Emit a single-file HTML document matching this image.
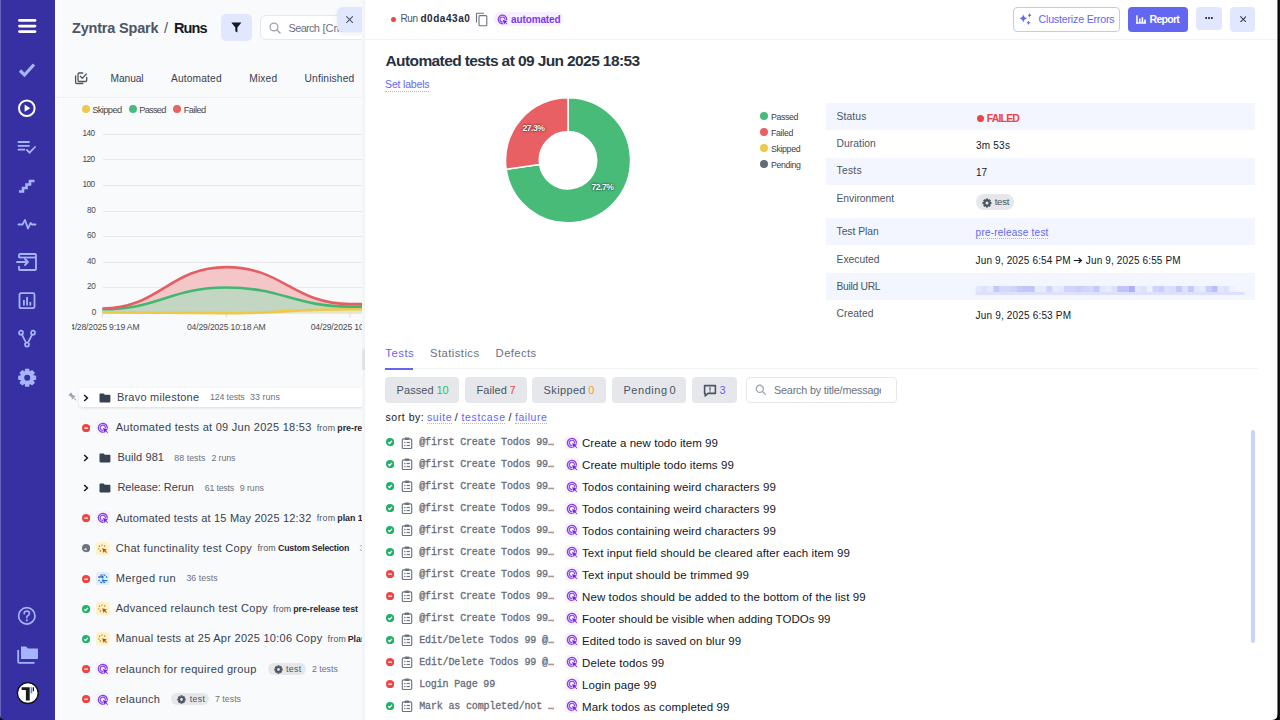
<!DOCTYPE html>
<html><head><meta charset="utf-8"><title>Runs</title>
<style>
html,body{margin:0;padding:0;width:1280px;height:720px;overflow:hidden;background:#fff}
body{position:relative;font-family:'Liberation Sans',sans-serif}
.a{position:absolute;box-sizing:border-box}
.t{position:absolute;white-space:nowrap}
</style></head><body>
<div class="a" style="left:0px;top:0px;width:55px;height:720px;background:#3730a3"></div><div class="a" style="left:0px;top:0px;width:1px;height:720px;background:#6b66bd"></div><svg class="a" style="left:17px;top:17px;" width="20" height="18" viewBox="0 0 20 18"><g stroke="#fff" stroke-width="2.8" stroke-linecap="round"><line x1="2.5" y1="3.4" x2="18" y2="3.4"/><line x1="2.5" y1="9.1" x2="18" y2="9.1"/><line x1="2.5" y1="14.6" x2="18" y2="14.6"/></g></svg><svg class="a" style="left:17px;top:61px;" width="20" height="18" viewBox="0 0 20 18"><path d="M3 9.5 L7.5 14 L17 3.5" fill="none" stroke="#a5b4fc" stroke-width="3.2" stroke-linecap="butt" stroke-linejoin="miter"/></svg><svg class="a" style="left:17px;top:99px;" width="20" height="20" viewBox="0 0 20 20"><circle cx="9.8" cy="9.2" r="7.8" fill="none" stroke="#fff" stroke-width="2"/><path d="M7.6 5.6 L13.2 9.2 L7.6 12.8 Z" fill="#fff"/></svg><svg class="a" style="left:17px;top:139px;" width="20" height="16" viewBox="0 0 20 16"><g stroke="#a5b4fc" stroke-width="1.8" fill="none" stroke-linecap="round"><line x1="1.5" y1="3" x2="12" y2="3"/><line x1="1.5" y1="6.8" x2="12" y2="6.8"/><line x1="1.5" y1="10.6" x2="7.5" y2="10.6"/><path d="M10 11 L12.6 13.6 L18 8"/></g></svg><svg class="a" style="left:17px;top:177px;" width="20" height="17" viewBox="0 0 20 17"><path d="M2 14.5 H6 V11 H9.5 V7.5 H13 V4 H17.5" fill="none" stroke="#a5b4fc" stroke-width="2.6"/></svg><svg class="a" style="left:17px;top:218px;" width="20" height="13" viewBox="0 0 20 13"><path d="M1.5 6.5 H5.5 L8 2 L11 10.5 L13.5 5 L15 6.5 H18.5" fill="none" stroke="#a5b4fc" stroke-width="1.8" stroke-linejoin="round" stroke-linecap="round"/></svg><svg class="a" style="left:16px;top:252px;" width="22" height="20" viewBox="0 0 22 20"><g fill="none" stroke="#a5b4fc" stroke-width="1.8"><path d="M3 6 V3 Q3 2 4 2 H19 Q20 2 20 3 V17 Q20 18 19 18 H4 Q3 18 3 17 V14"/><line x1="3" y1="5.5" x2="20" y2="5.5"/><path d="M1 10 H12 M9 7 L12 10 L9 13" stroke-linecap="round" stroke-linejoin="round"/></g></svg><svg class="a" style="left:17px;top:291px;" width="20" height="19" viewBox="0 0 20 19"><g fill="none" stroke="#a5b4fc" stroke-width="1.8"><rect x="2.5" y="2.2" width="15" height="15" rx="1.5"/></g><g fill="#a5b4fc"><rect x="6" y="9" width="1.8" height="5.5"/><rect x="9.2" y="6" width="1.8" height="8.5"/><rect x="12.4" y="11" width="1.8" height="3.5"/></g></svg><svg class="a" style="left:17px;top:329px;" width="20" height="20" viewBox="0 0 20 20"><g fill="none" stroke="#a5b4fc" stroke-width="1.7"><circle cx="4" cy="3.7" r="2"/><circle cx="16" cy="3.7" r="2"/><circle cx="10" cy="15.6" r="2"/><path d="M4.8 5.5 L9 13.6 M15.2 5.5 L11 13.6"/></g></svg><svg class="a" style="left:17px;top:367px;" width="20" height="21" viewBox="0 0 20 21"><path fill-rule="evenodd" fill="#a5b4fc" d="M19.18,8.69 L19.18,12.71 L16.28,13.27 L16.32,13.18 L17.97,15.63 L15.13,18.47 L12.68,16.82 L12.77,16.78 L12.21,19.68 L8.19,19.68 L7.63,16.78 L7.72,16.82 L5.27,18.47 L2.43,15.63 L4.08,13.18 L4.12,13.27 L1.22,12.71 L1.22,8.69 L4.12,8.13 L4.08,8.22 L2.43,5.77 L5.27,2.93 L7.72,4.58 L7.63,4.62 L8.19,1.72 L12.21,1.72 L12.77,4.62 L12.68,4.58 L15.13,2.93 L17.97,5.77 L16.32,8.22 L16.28,8.13 Z M13.2,10.7 A3.0,3.0 0 1,0 7.199999999999999,10.7 A3.0,3.0 0 1,0 13.2,10.7 Z"/></svg><svg class="a" style="left:16px;top:605px;" width="22" height="22" viewBox="0 0 22 22"><circle cx="10.8" cy="10.9" r="8.2" fill="none" stroke="#a5b4fc" stroke-width="1.7"/><path d="M8.2 8.6 Q8.2 6 10.8 6 Q13.4 6 13.4 8.4 Q13.4 10 11.6 10.8 Q10.8 11.2 10.8 12.6" fill="none" stroke="#a5b4fc" stroke-width="1.7" stroke-linecap="round"/><circle cx="10.8" cy="15.3" r="1.1" fill="#a5b4fc"/></svg><svg class="a" style="left:16px;top:644px;" width="23" height="21" viewBox="0 0 23 21"><path d="M5 2.5 H10 L12 4.5 H21 Q22 4.5 22 5.5 V14 Q22 15 21 15 H5.5 Q5 15 5 14.5 Z" fill="#a5b4fc"/><path d="M2.2 6 V17.8 Q2.2 18.8 3.2 18.8 H18.5" fill="none" stroke="#a5b4fc" stroke-width="1.8"/></svg><svg class="a" style="left:16px;top:681px;" width="24" height="24" viewBox="0 0 24 24"><circle cx="11.8" cy="12.1" r="10.4" fill="#fff" stroke="#111" stroke-width="1.3"/><path d="M5.6 6.2 H13.7 V19.6 H9.9 V9.0 H5.6 Z" fill="#1a1a1a"/><rect x="14.6" y="6.2" width="1.6" height="6.2" fill="#4a90f0"/><rect x="16.8" y="6.2" width="1.2" height="4" fill="#1a1a1a"/></svg><svg class="a" style="left:0;top:715px" width="5" height="5"><path d="M0 0 Q0 5 5 5 H0 Z" fill="#000"/></svg><div class="a" style="left:0;top:0;width:362px;height:720px;overflow:hidden"><div class="a" style="left:55px;top:0px;width:307px;height:720px;background:#f9fafb"></div><div class="a" style="left:55px;top:0px;width:1.5px;height:720px;background:#fff"></div><div class="t" style="left:72.00px;top:17.75px;line-height:20.3px;font-size:14.5px;color:#4b5563;font-weight:700;letter-spacing:-0.187px;">Zyntra Spark</div><div class="t" style="left:164.00px;top:17.75px;line-height:20.3px;font-size:14.5px;color:#4b5563;">/</div><div class="t" style="left:174.00px;top:17.75px;line-height:20.3px;font-size:14.5px;color:#111827;font-weight:700;letter-spacing:-0.883px;">Runs</div><div class="a" style="left:221px;top:14px;width:31px;height:27px;background:#e0e7ff;border-radius:5px"></div><svg class="a" style="left:231px;top:22px;" width="11" height="11" viewBox="0 0 11 11"><path d="M0.3 0.6 H10.4 L6.4 5.4 V10.6 L4.3 9.2 V5.4 Z" fill="#111827"/></svg><div class="a" style="left:260px;top:15px;width:120px;height:25px;background:#fff;border:1px solid #e5e7eb;border-radius:6px;box-sizing:border-box"></div><svg class="a" style="left:269px;top:22px;" width="13" height="12" viewBox="0 0 13 12"><circle cx="5" cy="5" r="3.9" fill="none" stroke="#9ca3af" stroke-width="1.3"/><line x1="7.8" y1="7.8" x2="11" y2="11" stroke="#9ca3af" stroke-width="1.4" stroke-linecap="round"/></svg><div class="t" style="left:288.60px;top:20.90px;line-height:15.4px;font-size:11px;color:#6b7280;letter-spacing:-0.692px;">Search</div><div class="t" style="left:322.50px;top:20.90px;line-height:15.4px;font-size:11px;color:#6b7280;">[Cmd+K]</div><div class="a" style="left:337px;top:7px;width:30px;height:25px;background:#e0e7ff;border-radius:6px;box-shadow:0 2px 4px rgba(0,0,0,0.08)"></div><svg class="a" style="left:345.8px;top:15.6px;" width="7.2" height="7.2" viewBox="0 0 7.2 7.2"><path d="M0.3 0.3 L6.9 6.9 M6.9 0.3 L0.3 6.9" stroke="#4b5563" stroke-width="1.1"/></svg><svg class="a" style="left:74px;top:71px;" width="14" height="14" viewBox="0 0 14 14"><g fill="none" stroke="#4b5563" stroke-width="1.3" stroke-linecap="round" stroke-linejoin="round"><path d="M8.8 2 H5.2 Q4 2 4 3.2 V9.3 Q4 10.5 5.2 10.5 H11.5 Q12.7 10.5 12.7 9.3 V6.3"/><path d="M6.3 5.3 L8.3 7.4 L12.4 3"/><path d="M1.6 5 V11.3 Q1.6 12.5 2.8 12.5 H8.8"/></g></svg><div class="t" style="left:110.50px;top:71.86px;line-height:14.28px;font-size:10.2px;color:#374151;letter-spacing:-0.064px;">Manual</div><div class="t" style="left:171.00px;top:71.86px;line-height:14.28px;font-size:10.2px;color:#374151;letter-spacing:0.165px;">Automated</div><div class="t" style="left:249.30px;top:71.86px;line-height:14.28px;font-size:10.2px;color:#374151;letter-spacing:0.153px;">Mixed</div><div class="t" style="left:304.60px;top:71.86px;line-height:14.28px;font-size:10.2px;color:#374151;letter-spacing:0.162px;">Unfinished</div><div class="a" style="left:55px;top:97px;width:307px;height:1px;background:#eef0f3"></div><div class="a" style="left:82px;top:104.7px;width:8px;height:8px;background:#ecc94b;border-radius:50%"></div><div class="a" style="left:128.9px;top:104.7px;width:8px;height:8px;background:#48bb78;border-radius:50%"></div><div class="a" style="left:173.4px;top:104.7px;width:8px;height:8px;background:#e86464;border-radius:50%"></div><div class="t" style="left:92.20px;top:104.39px;line-height:13.02px;font-size:9.3px;color:#4a4a4a;letter-spacing:-0.602px;">Skipped</div><div class="t" style="left:139.20px;top:104.39px;line-height:13.02px;font-size:9.3px;color:#4a4a4a;letter-spacing:-0.763px;">Passed</div><div class="t" style="left:183.70px;top:104.39px;line-height:13.02px;font-size:9.3px;color:#4a4a4a;letter-spacing:-0.566px;">Failed</div><div class="t" style="left:91.64px;top:307.06px;line-height:11.48px;font-size:8.2px;color:#4a4a4a;letter-spacing:-0.5px">0</div><div class="a" style="left:102.5px;top:287.3px;width:260px;height:1px;background:#e6e8eb"></div><div class="t" style="left:87.09px;top:281.47px;line-height:11.48px;font-size:8.2px;color:#4a4a4a;letter-spacing:-0.5px">20</div><div class="a" style="left:102.5px;top:261.7px;width:260px;height:1px;background:#e6e8eb"></div><div class="t" style="left:87.09px;top:255.89px;line-height:11.48px;font-size:8.2px;color:#4a4a4a;letter-spacing:-0.5px">40</div><div class="a" style="left:102.5px;top:236.1px;width:260px;height:1px;background:#e6e8eb"></div><div class="t" style="left:87.09px;top:230.30px;line-height:11.48px;font-size:8.2px;color:#4a4a4a;letter-spacing:-0.5px">60</div><div class="a" style="left:102.5px;top:210.6px;width:260px;height:1px;background:#e6e8eb"></div><div class="t" style="left:87.09px;top:204.72px;line-height:11.48px;font-size:8.2px;color:#4a4a4a;letter-spacing:-0.5px">80</div><div class="a" style="left:102.5px;top:185.0px;width:260px;height:1px;background:#e6e8eb"></div><div class="t" style="left:82.53px;top:179.13px;line-height:11.48px;font-size:8.2px;color:#4a4a4a;letter-spacing:-0.5px">100</div><div class="a" style="left:102.5px;top:159.4px;width:260px;height:1px;background:#e6e8eb"></div><div class="t" style="left:82.53px;top:153.55px;line-height:11.48px;font-size:8.2px;color:#4a4a4a;letter-spacing:-0.5px">120</div><div class="a" style="left:102.5px;top:133.8px;width:260px;height:1px;background:#e6e8eb"></div><div class="t" style="left:82.53px;top:127.96px;line-height:11.48px;font-size:8.2px;color:#4a4a4a;letter-spacing:-0.5px">140</div><svg class="a" style="left:0;top:0" width="362" height="340"><path d="M102.4,308.53871428571426 C158.71818181818182,308.53871428571426 169.9818181818182,267.0898571428571 226.3,267.0898571428571 C282.5272727272727,267.0898571428571 293.77272727272725,304.06121428571424 350,304.06121428571424 L362,304.06121428571424 L362,313.4 L102.4,313.4 Z" fill="#f4c6c8"/><path d="M102.4,309.3062857142857 C158.71818181818182,309.3062857142857 169.9818181818182,287.5584285714286 226.3,287.5584285714286 C282.5272727272727,287.5584285714286 293.77272727272725,306.6197857142857 350,306.6197857142857 L362,306.6197857142857 L362,313.4 L102.4,313.4 Z" fill="#c2d6c2"/><path d="M102.4,312.50449999999995 C158.71818181818182,312.50449999999995 169.9818181818182,313.1441428571428 226.3,313.1441428571428 C282.5272727272727,313.1441428571428 293.77272727272725,309.1783571428571 350,309.1783571428571 L362,309.1783571428571 L362,313.4 L102.4,313.4 Z" fill="#e8e4c8"/><line x1="102.4" y1="313.4" x2="362" y2="313.4" stroke="#e6e8eb" stroke-width="1"/><line x1="102.4" y1="313.4" x2="102.4" y2="317.4" stroke="#d5d8dc" stroke-width="1"/><line x1="226.3" y1="313.4" x2="226.3" y2="317.4" stroke="#d5d8dc" stroke-width="1"/><line x1="350" y1="313.4" x2="350" y2="317.4" stroke="#d5d8dc" stroke-width="1"/><path d="M102.4,312.50449999999995 C158.71818181818182,312.50449999999995 169.9818181818182,313.1441428571428 226.3,313.1441428571428 C282.5272727272727,313.1441428571428 293.77272727272725,309.1783571428571 350,309.1783571428571 L362,309.1783571428571" fill="none" stroke="#ecc94b" stroke-width="2.6"/><path d="M102.4,309.3062857142857 C158.71818181818182,309.3062857142857 169.9818181818182,287.5584285714286 226.3,287.5584285714286 C282.5272727272727,287.5584285714286 293.77272727272725,306.6197857142857 350,306.6197857142857 L362,306.6197857142857" fill="none" stroke="#40b870" stroke-width="2.6"/><path d="M102.4,308.53871428571426 C158.71818181818182,308.53871428571426 169.9818181818182,267.0898571428571 226.3,267.0898571428571 C282.5272727272727,267.0898571428571 293.77272727272725,304.06121428571424 350,304.06121428571424 L362,304.06121428571424" fill="none" stroke="#e35f62" stroke-width="2.6"/></svg><div class="a" style="left:72px;top:315px;width:290px;height:20px;overflow:hidden"><div class="t" style="left:-6.62px;top:5.98px;line-height:12.04px;font-size:8.6px;color:#4a4a4a;letter-spacing:-0.161px;">04/28/2025 9:19 AM</div><div class="t" style="left:114.98px;top:5.98px;line-height:12.04px;font-size:8.6px;color:#4a4a4a;letter-spacing:-0.162px;">04/29/2025 10:18 AM</div><div class="t" style="left:238.68px;top:5.98px;line-height:12.04px;font-size:8.6px;color:#4a4a4a;letter-spacing:-0.162px;">04/29/2025 10:18 AM</div></div><div class="a" style="left:79px;top:388px;width:290px;height:18.5px;background:#fff;border-radius:4px;box-shadow:0 1px 3px rgba(0,0,0,0.12)"></div><svg class="a" style="left:67.5px;top:391.5px;" width="10" height="10" viewBox="0 0 10 10"><g transform="rotate(-45 5 5)" fill="#9ca3af"><rect x="3.2" y="0.4" width="3.6" height="1.3" rx="0.4"/><rect x="3.7" y="1.5" width="2.6" height="3.2"/><path d="M2.2 6.2 L3.7 4.6 H6.3 L7.8 6.2 Z"/><rect x="4.6" y="6" width="0.8" height="3.6"/></g></svg><svg class="a" style="left:82.5px;top:393.5px;" width="6" height="8" viewBox="0 0 6 8"><path d="M1.2 1 L4.4 4 L1.2 7" fill="none" stroke="#111827" stroke-width="1.5"/></svg><svg class="a" style="left:98.7px;top:392.5px;" width="12" height="10" viewBox="0 0 12 10"><path d="M0.5 1.2 Q0.5 0.4 1.3 0.4 H4.6 L5.8 1.8 H10.6 Q11.4 1.8 11.4 2.6 V8.6 Q11.4 9.4 10.6 9.4 H1.3 Q0.5 9.4 0.5 8.6 Z" fill="#374151"/></svg><div class="t" style="left:116.90px;top:389.80px;line-height:15.4px;font-size:11px;color:#374151;letter-spacing:0.237px;">Bravo milestone</div><div class="t" style="left:210.00px;top:391.34px;line-height:12.32px;font-size:8.8px;color:#6b7280;letter-spacing:-0.138px;">124 tests</div><div class="t" style="left:250.00px;top:391.34px;line-height:12.32px;font-size:8.8px;color:#6b7280;letter-spacing:0.076px;">33 runs</div><svg class="a" style="left:81.7px;top:423.59px;" width="8.2" height="8.2" viewBox="0 0 8.2 8.2"><circle cx="4.1" cy="4.1" r="4.1" fill="#ef4444"/><rect x="2.1" y="3.4" width="4" height="1.4" rx="0.5" fill="#fff"/></svg><svg class="a" style="left:96.4px;top:420.89px;" width="13.6" height="13.6" viewBox="0 0 14 14"><rect width="14" height="14" rx="3" fill="#f6f1ff"/><g fill="none" stroke="#8b3fe6"><path d="M7.80,11.53 A4.6,4.6 0 1,1 11.53,7.80" stroke-width="1.35"/><path d="M7.47,9.66 A2.7,2.7 0 1,1 9.66,7.47" stroke-width="1.2"/></g><path d="M7.2,7.2 L8.8,12.3 L9.9,10.5 L11.8,12.4 L12.4,11.8 L10.5,9.9 L12.3,8.8 Z" fill="#6d28d9"/></svg><div class="t" style="left:115.70px;top:419.99px;line-height:15.4px;font-size:11px;color:#374151;letter-spacing:0.277px;">Automated tests at 09 Jun 2025 18:53</div><div class="t" style="left:316.70px;top:421.53px;line-height:12.32px;font-size:8.8px;color:#4b5563;letter-spacing:0.230px;">from</div><div class="t" style="left:337.30px;top:421.53px;line-height:12.32px;font-size:8.8px;color:#1f2937;font-weight:700;">pre-release test</div><svg class="a" style="left:82.5px;top:453.88px;" width="6" height="8" viewBox="0 0 6 8"><path d="M1.2 1 L4.4 4 L1.2 7" fill="none" stroke="#111827" stroke-width="1.5"/></svg><svg class="a" style="left:98.7px;top:452.88px;" width="12" height="10" viewBox="0 0 12 10"><path d="M0.5 1.2 Q0.5 0.4 1.3 0.4 H4.6 L5.8 1.8 H10.6 Q11.4 1.8 11.4 2.6 V8.6 Q11.4 9.4 10.6 9.4 H1.3 Q0.5 9.4 0.5 8.6 Z" fill="#374151"/></svg><div class="t" style="left:117.40px;top:450.18px;line-height:15.4px;font-size:11px;color:#374151;letter-spacing:0.091px;">Build 981</div><div class="t" style="left:174.30px;top:451.72px;line-height:12.32px;font-size:8.8px;color:#6b7280;letter-spacing:0.041px;">88 tests</div><div class="t" style="left:211.40px;top:451.72px;line-height:12.32px;font-size:8.8px;color:#6b7280;letter-spacing:-0.071px;">2 runs</div><svg class="a" style="left:82.5px;top:484.07px;" width="6" height="8" viewBox="0 0 6 8"><path d="M1.2 1 L4.4 4 L1.2 7" fill="none" stroke="#111827" stroke-width="1.5"/></svg><svg class="a" style="left:98.7px;top:483.07px;" width="12" height="10" viewBox="0 0 12 10"><path d="M0.5 1.2 Q0.5 0.4 1.3 0.4 H4.6 L5.8 1.8 H10.6 Q11.4 1.8 11.4 2.6 V8.6 Q11.4 9.4 10.6 9.4 H1.3 Q0.5 9.4 0.5 8.6 Z" fill="#374151"/></svg><div class="t" style="left:117.40px;top:480.37px;line-height:15.4px;font-size:11px;color:#374151;">Release: Rerun</div><div class="t" style="left:204.80px;top:481.91px;line-height:12.32px;font-size:8.8px;color:#6b7280;letter-spacing:-0.202px;">61 tests</div><div class="t" style="left:239.70px;top:481.91px;line-height:12.32px;font-size:8.8px;color:#6b7280;letter-spacing:-0.031px;">9 runs</div><svg class="a" style="left:81.7px;top:514.16px;" width="8.2" height="8.2" viewBox="0 0 8.2 8.2"><circle cx="4.1" cy="4.1" r="4.1" fill="#ef4444"/><rect x="2.1" y="3.4" width="4" height="1.4" rx="0.5" fill="#fff"/></svg><svg class="a" style="left:96.4px;top:511.46px;" width="13.6" height="13.6" viewBox="0 0 14 14"><rect width="14" height="14" rx="3" fill="#f6f1ff"/><g fill="none" stroke="#8b3fe6"><path d="M7.80,11.53 A4.6,4.6 0 1,1 11.53,7.80" stroke-width="1.35"/><path d="M7.47,9.66 A2.7,2.7 0 1,1 9.66,7.47" stroke-width="1.2"/></g><path d="M7.2,7.2 L8.8,12.3 L9.9,10.5 L11.8,12.4 L12.4,11.8 L10.5,9.9 L12.3,8.8 Z" fill="#6d28d9"/></svg><div class="t" style="left:115.70px;top:510.56px;line-height:15.4px;font-size:11px;color:#374151;letter-spacing:0.189px;">Automated tests at 15 May 2025 12:32</div><div class="t" style="left:316.70px;top:512.10px;line-height:12.32px;font-size:8.8px;color:#4b5563;letter-spacing:0.230px;">from</div><div class="t" style="left:337.30px;top:512.10px;line-height:12.32px;font-size:8.8px;color:#1f2937;font-weight:700;">plan 1:1</div><svg class="a" style="left:81.7px;top:544.35px;" width="8.2" height="8.2" viewBox="0 0 8.2 8.2"><circle cx="4.1" cy="4.1" r="4.1" fill="#6b7280"/><path d="M1.6 5.4 L4.4 3.8 L4.6 6.6 Z" fill="#e5e7eb"/></svg><svg class="a" style="left:96.4px;top:541.6500000000001px;" width="13.6" height="13.6" viewBox="0 0 14 14"><rect width="14" height="14" rx="3" fill="#fef3c7"/><g fill="#c2670c"><circle cx="6.2" cy="3.2" r="0.75"/><circle cx="3.6" cy="4.4" r="0.75"/><circle cx="8.9" cy="4.0" r="0.75"/><circle cx="3.0" cy="7.1" r="0.75"/><circle cx="4.5" cy="9.3" r="0.75"/></g><path d="M6.4,6.4 L7.7,11.2 L8.7,9.5 L10.5,11.3 L11.3,10.5 L9.5,8.7 L11.2,7.7 Z" fill="#b45309"/></svg><div class="t" style="left:115.70px;top:540.75px;line-height:15.4px;font-size:11px;color:#374151;letter-spacing:0.323px;">Chat functinality test Copy</div><div class="t" style="left:257.40px;top:542.29px;line-height:12.32px;font-size:8.8px;color:#4b5563;letter-spacing:0.197px;">from</div><div class="t" style="left:278.00px;top:542.29px;line-height:12.32px;font-size:8.8px;color:#1f2937;font-weight:700;letter-spacing:-0.200px;">Custom Selection</div><div class="t" style="left:359.50px;top:542.29px;line-height:12.32px;font-size:8.8px;color:#9ca3af;">3</div><svg class="a" style="left:81.7px;top:574.54px;" width="8.2" height="8.2" viewBox="0 0 8.2 8.2"><circle cx="4.1" cy="4.1" r="4.1" fill="#ef4444"/><rect x="2.1" y="3.4" width="4" height="1.4" rx="0.5" fill="#fff"/></svg><svg class="a" style="left:96.4px;top:571.84px;" width="13.6" height="13.6" viewBox="0 0 14 14"><rect width="14" height="14" rx="3" fill="#e0eefe"/><g fill="none" stroke="#1f6fd1" stroke-width="1.2" stroke-dasharray="2 1.1"><path d="M4.6 3.6 A4.3 4.3 0 0 1 11.2 6"/><path d="M9.4 10.4 A4.3 4.3 0 0 1 2.8 8"/></g><g fill="#1f6fd1"><path d="M2.3 4.4 H6.2 V3 L8.2 5.1 L6.2 7.2 V5.8 H2.3 Z"/><path d="M11.7 9.6 H7.8 V11 L5.8 8.9 L7.8 6.8 V8.2 H11.7 Z"/></g></svg><div class="t" style="left:115.70px;top:570.94px;line-height:15.4px;font-size:11px;color:#374151;letter-spacing:0.404px;">Merged run</div><div class="t" style="left:186.40px;top:572.48px;line-height:12.32px;font-size:8.8px;color:#6b7280;letter-spacing:0.055px;">36 tests</div><svg class="a" style="left:81.7px;top:604.73px;" width="8.2" height="8.2" viewBox="0 0 8.2 8.2"><circle cx="4.1" cy="4.1" r="4.1" fill="#1fb06a"/><path d="M2.3 4.2 L3.6 5.5 L6.0 2.9" fill="none" stroke="#fff" stroke-width="1.3"/></svg><svg class="a" style="left:96.4px;top:602.0300000000001px;" width="13.6" height="13.6" viewBox="0 0 14 14"><rect width="14" height="14" rx="3" fill="#fef3c7"/><g fill="#c2670c"><circle cx="6.2" cy="3.2" r="0.75"/><circle cx="3.6" cy="4.4" r="0.75"/><circle cx="8.9" cy="4.0" r="0.75"/><circle cx="3.0" cy="7.1" r="0.75"/><circle cx="4.5" cy="9.3" r="0.75"/></g><path d="M6.4,6.4 L7.7,11.2 L8.7,9.5 L10.5,11.3 L11.3,10.5 L9.5,8.7 L11.2,7.7 Z" fill="#b45309"/></svg><div class="t" style="left:115.70px;top:601.13px;line-height:15.4px;font-size:11px;color:#374151;letter-spacing:0.315px;">Advanced relaunch test Copy</div><div class="t" style="left:273.00px;top:602.67px;line-height:12.32px;font-size:8.8px;color:#4b5563;letter-spacing:0.197px;">from</div><div class="t" style="left:293.20px;top:602.67px;line-height:12.32px;font-size:8.8px;color:#1f2937;font-weight:700;letter-spacing:-0.016px;">pre-release test</div><svg class="a" style="left:81.7px;top:634.92px;" width="8.2" height="8.2" viewBox="0 0 8.2 8.2"><circle cx="4.1" cy="4.1" r="4.1" fill="#1fb06a"/><path d="M2.3 4.2 L3.6 5.5 L6.0 2.9" fill="none" stroke="#fff" stroke-width="1.3"/></svg><svg class="a" style="left:96.4px;top:632.22px;" width="13.6" height="13.6" viewBox="0 0 14 14"><rect width="14" height="14" rx="3" fill="#fef3c7"/><g fill="#c2670c"><circle cx="6.2" cy="3.2" r="0.75"/><circle cx="3.6" cy="4.4" r="0.75"/><circle cx="8.9" cy="4.0" r="0.75"/><circle cx="3.0" cy="7.1" r="0.75"/><circle cx="4.5" cy="9.3" r="0.75"/></g><path d="M6.4,6.4 L7.7,11.2 L8.7,9.5 L10.5,11.3 L11.3,10.5 L9.5,8.7 L11.2,7.7 Z" fill="#b45309"/></svg><div class="t" style="left:115.70px;top:631.32px;line-height:15.4px;font-size:11px;color:#374151;letter-spacing:0.275px;">Manual tests at 25 Apr 2025 10:06 Copy</div><div class="t" style="left:327.60px;top:632.86px;line-height:12.32px;font-size:8.8px;color:#4b5563;letter-spacing:0.230px;">from</div><div class="t" style="left:347.70px;top:632.86px;line-height:12.32px;font-size:8.8px;color:#1f2937;font-weight:700;">Plan 2</div><svg class="a" style="left:81.7px;top:665.11px;" width="8.2" height="8.2" viewBox="0 0 8.2 8.2"><circle cx="4.1" cy="4.1" r="4.1" fill="#ef4444"/><rect x="2.1" y="3.4" width="4" height="1.4" rx="0.5" fill="#fff"/></svg><svg class="a" style="left:96.4px;top:662.4100000000001px;" width="13.6" height="13.6" viewBox="0 0 14 14"><rect width="14" height="14" rx="3" fill="#f6f1ff"/><g fill="none" stroke="#8b3fe6"><path d="M7.80,11.53 A4.6,4.6 0 1,1 11.53,7.80" stroke-width="1.35"/><path d="M7.47,9.66 A2.7,2.7 0 1,1 9.66,7.47" stroke-width="1.2"/></g><path d="M7.2,7.2 L8.8,12.3 L9.9,10.5 L11.8,12.4 L12.4,11.8 L10.5,9.9 L12.3,8.8 Z" fill="#6d28d9"/></svg><div class="t" style="left:115.70px;top:661.51px;line-height:15.4px;font-size:11px;color:#374151;letter-spacing:0.304px;">relaunch for required group</div><div class="a" style="left:267.6px;top:663.21px;width:38.2px;height:12px;background:#e5e7eb;border-radius:6px"></div><svg class="a" style="left:273.6px;top:664.71px;" width="9" height="9" viewBox="0 0 9 9"><path fill-rule="evenodd" fill="#4b5563" d="M8.70,3.56 L8.70,5.44 L7.36,5.71 L7.37,5.67 L8.13,6.80 L6.80,8.13 L5.67,7.37 L5.71,7.36 L5.44,8.70 L3.56,8.70 L3.29,7.36 L3.33,7.37 L2.20,8.13 L0.87,6.80 L1.63,5.67 L1.64,5.71 L0.30,5.44 L0.30,3.56 L1.64,3.29 L1.63,3.33 L0.87,2.20 L2.20,0.87 L3.33,1.63 L3.29,1.64 L3.56,0.30 L5.44,0.30 L5.71,1.64 L5.67,1.63 L6.80,0.87 L8.13,2.20 L7.37,3.33 L7.36,3.29 Z M5.9,4.5 A1.4,1.4 0 1,0 3.1,4.5 A1.4,1.4 0 1,0 5.9,4.5 Z"/></svg><div class="t" style="left:286.00px;top:663.05px;line-height:12.32px;font-size:8.8px;color:#4b5563;letter-spacing:0.304px;">test</div><div class="t" style="left:311.90px;top:663.05px;line-height:12.32px;font-size:8.8px;color:#6b7280;letter-spacing:0.013px;">2 tests</div><svg class="a" style="left:81.7px;top:695.3px;" width="8.2" height="8.2" viewBox="0 0 8.2 8.2"><circle cx="4.1" cy="4.1" r="4.1" fill="#ef4444"/><rect x="2.1" y="3.4" width="4" height="1.4" rx="0.5" fill="#fff"/></svg><svg class="a" style="left:96.4px;top:692.6px;" width="13.6" height="13.6" viewBox="0 0 14 14"><rect width="14" height="14" rx="3" fill="#f6f1ff"/><g fill="none" stroke="#8b3fe6"><path d="M7.80,11.53 A4.6,4.6 0 1,1 11.53,7.80" stroke-width="1.35"/><path d="M7.47,9.66 A2.7,2.7 0 1,1 9.66,7.47" stroke-width="1.2"/></g><path d="M7.2,7.2 L8.8,12.3 L9.9,10.5 L11.8,12.4 L12.4,11.8 L10.5,9.9 L12.3,8.8 Z" fill="#6d28d9"/></svg><div class="t" style="left:115.70px;top:691.70px;line-height:15.4px;font-size:11px;color:#374151;letter-spacing:0.285px;">relaunch</div><div class="a" style="left:171.4px;top:693.4px;width:38px;height:12px;background:#e5e7eb;border-radius:6px"></div><svg class="a" style="left:177.4px;top:694.9px;" width="9" height="9" viewBox="0 0 9 9"><path fill-rule="evenodd" fill="#4b5563" d="M8.70,3.56 L8.70,5.44 L7.36,5.71 L7.37,5.67 L8.13,6.80 L6.80,8.13 L5.67,7.37 L5.71,7.36 L5.44,8.70 L3.56,8.70 L3.29,7.36 L3.33,7.37 L2.20,8.13 L0.87,6.80 L1.63,5.67 L1.64,5.71 L0.30,5.44 L0.30,3.56 L1.64,3.29 L1.63,3.33 L0.87,2.20 L2.20,0.87 L3.33,1.63 L3.29,1.64 L3.56,0.30 L5.44,0.30 L5.71,1.64 L5.67,1.63 L6.80,0.87 L8.13,2.20 L7.37,3.33 L7.36,3.29 Z M5.9,4.5 A1.4,1.4 0 1,0 3.1,4.5 A1.4,1.4 0 1,0 5.9,4.5 Z"/></svg><div class="t" style="left:189.80px;top:693.24px;line-height:12.32px;font-size:8.8px;color:#4b5563;letter-spacing:0.304px;">test</div><div class="t" style="left:215.00px;top:693.24px;line-height:12.32px;font-size:8.8px;color:#6b7280;letter-spacing:0.013px;">7 tests</div></div><div class="a" style="left:362px;top:0px;width:3px;height:720px;background:#f6f7f8"></div><div class="a" style="left:361.6px;top:348.8px;width:3.2px;height:21.2px;background:#e3e5e8;border-radius:1.6px"></div><div class="a" style="left:365px;top:0px;width:912px;height:720px;background:#fff;box-shadow:-1px 0 2px rgba(0,0,0,0.03)"></div><div class="a" style="left:1277px;top:0px;width:1px;height:720px;background:#7a7a7a"></div><div class="a" style="left:1278px;top:0px;width:1px;height:720px;background:#070707"></div><div class="a" style="left:1279px;top:0px;width:1px;height:720px;background:#161616"></div><svg class="a" style="left:1272px;top:713px" width="6" height="7"><path d="M6 0 Q6 7 0 7 H6 Z" fill="#000"/></svg><div class="a" style="left:365px;top:39px;width:912px;height:1px;background:#f1f2f4"></div><div class="a" style="left:390.6px;top:16.9px;width:5px;height:5px;background:#ef4444;border-radius:50%"></div><div class="t" style="left:400.60px;top:12.20px;line-height:14.0px;font-size:10px;color:#4b5563;letter-spacing:-0.45px">Run</div><div class="t" style="left:420.40px;top:12.40px;line-height:14.0px;font-size:10px;color:#1f2937;font-weight:700;letter-spacing:0.558px;">d0da43a0</div><svg class="a" style="left:475px;top:12px;" width="14" height="15" viewBox="0 0 14 15"><g fill="none" stroke="#6b7280" stroke-width="1.1"><path d="M1.5 10.5 V2 Q1.5 1.2 2.3 1.2 H9"/><rect x="4" y="3.6" width="7.8" height="10.2" rx="1"/></g></svg><div class="a" style="left:494px;top:12px;width:68.5px;height:14px;background:#f6f0ff;border-radius:6px"></div><svg class="a" style="left:495.5px;top:12.5px;" width="13" height="13" viewBox="0 0 14 14"><rect width="14" height="14" rx="3" fill="#f6f0ff"/><g fill="none" stroke="#8b3fe6"><path d="M7.80,11.53 A4.6,4.6 0 1,1 11.53,7.80" stroke-width="1.35"/><path d="M7.47,9.66 A2.7,2.7 0 1,1 9.66,7.47" stroke-width="1.2"/></g><path d="M7.2,7.2 L8.8,12.3 L9.9,10.5 L11.8,12.4 L12.4,11.8 L10.5,9.9 L12.3,8.8 Z" fill="#6d28d9"/></svg><div class="t" style="left:511.00px;top:12.80px;line-height:14.0px;font-size:10px;color:#7c3aed;font-weight:700;letter-spacing:-0.120px;">automated</div><div class="a" style="left:1013px;top:6.5px;width:107.2px;height:25.5px;border:1px solid #c3c8fb;border-radius:4px;box-sizing:border-box;background:#fff"></div><svg class="a" style="left:1019px;top:9px;" width="14" height="20" viewBox="0 0 14 20"><path d="M4.3,5.300000000000001 Q4.8919999999999995,8.744 8.0,9.4 Q4.8919999999999995,10.056000000000001 4.3,13.5 Q3.7079999999999997,10.056000000000001 0.5999999999999996,9.4 Q3.7079999999999997,8.744 4.3,5.300000000000001 Z M10.6,4.05 Q10.904,5.898 12.5,6.25 Q10.904,6.602 10.6,8.45 Q10.296,6.602 8.7,6.25 Q10.296,5.898 10.6,4.05 Z M9.5,11.45 Q9.82,13.382 11.5,13.75 Q9.82,14.118 9.5,16.05 Q9.18,14.118 7.5,13.75 Q9.18,13.382 9.5,11.45 Z" fill="#6366f1"/></svg><div class="t" style="left:1038.50px;top:11.88px;line-height:14.84px;font-size:10.6px;color:#6366f1;letter-spacing:-0.174px;">Clusterize Errors</div><div class="a" style="left:1128.3px;top:7px;width:60px;height:25px;background:#6366f1;border-radius:4px"></div><svg class="a" style="left:1135.8px;top:15px;" width="10.5" height="9" viewBox="0 0 10.5 9"><g fill="#fff"><rect x="0.2" y="0.3" width="1.5" height="8.4"/><rect x="0.2" y="7.3" width="10" height="1.4"/><rect x="3.0" y="3.6" width="1.6" height="4.5"/><rect x="5.6" y="2.2" width="1.6" height="5.9"/><rect x="8.2" y="4.6" width="1.6" height="3.5"/></g></svg><div class="t" style="left:1149.60px;top:11.88px;line-height:14.84px;font-size:10.6px;color:#fff;font-weight:700;letter-spacing:-0.768px;">Report</div><div class="a" style="left:1196.3px;top:7px;width:25.4px;height:23px;background:#e0e7ff;border-radius:4px"></div><svg class="a" style="left:1204px;top:16.3px;" width="10" height="4" viewBox="0 0 10 4"><g fill="#111827"><circle cx="2.1" cy="2" r="1.0"/><circle cx="5" cy="2" r="1.0"/><circle cx="7.9" cy="2" r="1.0"/></g></svg><div class="a" style="left:1230px;top:7px;width:25.3px;height:25px;background:#e0e7ff;border-radius:4px"></div><svg class="a" style="left:1239.5px;top:15.9px;" width="6.6" height="6.6" viewBox="0 0 6.6 6.6"><path d="M0.3 0.3 L6.3 6.3 M6.3 0.3 L0.3 6.3" stroke="#374151" stroke-width="1.1"/></svg><div class="t" style="left:385.50px;top:49.95px;line-height:21.7px;font-size:15.5px;color:#283140;font-weight:700;letter-spacing:-0.602px;">Automated tests at 09 Jun 2025 18:53</div><div class="t" style="left:385.10px;top:76.55px;line-height:14.7px;font-size:10.5px;color:#6366f1;letter-spacing:-0.181px;">Set labels</div><div class="a" style="left:385px;top:91px;width:44px;height:1px;border-top:1px dotted #a5b4fc"></div><svg class="a" style="left:0;top:0" width="700" height="240"><path d="M568.00,97.80 A62.5,62.5 0 1,1 506.15,169.30 L539.60,164.43 A28.7,28.7 0 1,0 568.00,131.60 Z" fill="#48bb78" stroke="#fff" stroke-width="1.5"/><path d="M506.15,169.30 A62.5,62.5 0 0,1 568.00,97.80 L568.00,131.60 A28.7,28.7 0 0,0 539.60,164.43 Z" fill="#e86064" stroke="#fff" stroke-width="1.5"/></svg><div class="t" style="left:522.42px;top:122.28px;line-height:12.04px;font-size:8.6px;color:#fff;font-weight:700;letter-spacing:-0.444px;text-shadow:0 0 1.5px rgba(0,0,0,0.8),0 0 3px rgba(0,0,0,0.4)">27.3%</div><div class="t" style="left:591.42px;top:181.28px;line-height:12.04px;font-size:8.6px;color:#fff;font-weight:700;letter-spacing:-0.444px;text-shadow:0 0 1.5px rgba(0,0,0,0.8),0 0 3px rgba(0,0,0,0.4)">72.7%</div><div class="a" style="left:760.3px;top:112.2px;width:8px;height:8px;background:#48bb78;border-radius:50%"></div><div class="t" style="left:770.90px;top:111.34px;line-height:12.32px;font-size:8.8px;color:#3f3f3f;letter-spacing:-0.369px;">Passed</div><div class="a" style="left:760.3px;top:128.23000000000002px;width:8px;height:8px;background:#e86064;border-radius:50%"></div><div class="t" style="left:770.90px;top:127.37px;line-height:12.32px;font-size:8.8px;color:#3f3f3f;letter-spacing:-0.294px;">Failed</div><div class="a" style="left:760.3px;top:144.26px;width:8px;height:8px;background:#ecc94b;border-radius:50%"></div><div class="t" style="left:770.90px;top:143.40px;line-height:12.32px;font-size:8.8px;color:#3f3f3f;letter-spacing:-0.349px;">Skipped</div><div class="a" style="left:760.3px;top:160.29000000000002px;width:8px;height:8px;background:#646b78;border-radius:50%"></div><div class="t" style="left:770.90px;top:159.43px;line-height:12.32px;font-size:8.8px;color:#3f3f3f;letter-spacing:-0.383px;">Pending</div><div class="a" style="left:826px;top:103px;width:429px;height:27.30000000000001px;background:#f3f6fe"></div><div class="a" style="left:826px;top:158px;width:429px;height:27px;background:#f3f6fe"></div><div class="a" style="left:826px;top:218.3px;width:429px;height:26.899999999999977px;background:#f3f6fe"></div><div class="a" style="left:826px;top:273.3px;width:429px;height:26.899999999999977px;background:#f3f6fe"></div><div class="t" style="left:836.50px;top:109.79px;line-height:14.42px;font-size:10.3px;color:#4b5563;letter-spacing:0.119px;">Status</div><div class="t" style="left:836.50px;top:137.09px;line-height:14.42px;font-size:10.3px;color:#4b5563;letter-spacing:0.054px;">Duration</div><div class="t" style="left:836.50px;top:164.39px;line-height:14.42px;font-size:10.3px;color:#4b5563;letter-spacing:0.263px;">Tests</div><div class="t" style="left:836.50px;top:191.89px;line-height:14.42px;font-size:10.3px;color:#4b5563;letter-spacing:-0.021px;">Environment</div><div class="t" style="left:836.50px;top:225.29px;line-height:14.42px;font-size:10.3px;color:#4b5563;letter-spacing:-0.007px;">Test Plan</div><div class="t" style="left:836.50px;top:252.59px;line-height:14.42px;font-size:10.3px;color:#4b5563;letter-spacing:0.009px;">Executed</div><div class="t" style="left:836.50px;top:280.19px;line-height:14.42px;font-size:10.3px;color:#4b5563;letter-spacing:-0.282px;">Build URL</div><div class="t" style="left:836.50px;top:307.49px;line-height:14.42px;font-size:10.3px;color:#4b5563;letter-spacing:0.043px;">Created</div><div class="a" style="left:976.5px;top:114.6px;width:7.5px;height:7.5px;background:#ef4444;border-radius:50%"></div><div class="t" style="left:986.80px;top:111.25px;line-height:14.7px;font-size:10.5px;color:#ef4444;font-weight:700;letter-spacing:-0.849px;">FAILED</div><div class="t" style="left:976.00px;top:139.00px;line-height:14.0px;font-size:10px;color:#111827;letter-spacing:0.221px;">3m 53s</div><div class="t" style="left:976.00px;top:165.50px;line-height:14.0px;font-size:10px;color:#111827;">17</div><div class="a" style="left:976px;top:193.7px;width:38.3px;height:16.3px;background:#e5e7eb;border-radius:8px"></div><svg class="a" style="left:982px;top:197.5px;" width="10" height="10" viewBox="0 0 10 10"><path fill-rule="evenodd" fill="#4b5563" d="M9.49,4.00 L9.49,6.00 L8.04,6.29 L8.06,6.24 L8.88,7.46 L7.46,8.88 L6.24,8.06 L6.29,8.04 L6.00,9.49 L4.00,9.49 L3.71,8.04 L3.76,8.06 L2.54,8.88 L1.12,7.46 L1.94,6.24 L1.96,6.29 L0.51,6.00 L0.51,4.00 L1.96,3.71 L1.94,3.76 L1.12,2.54 L2.54,1.12 L3.76,1.94 L3.71,1.96 L4.00,0.51 L6.00,0.51 L6.29,1.96 L6.24,1.94 L7.46,1.12 L8.88,2.54 L8.06,3.76 L8.04,3.71 Z M6.5,5 A1.5,1.5 0 1,0 3.5,5 A1.5,1.5 0 1,0 6.5,5 Z"/></svg><div class="t" style="left:994.70px;top:195.28px;line-height:13.44px;font-size:9.6px;color:#4b5563;letter-spacing:-0.256px;">test</div><div class="t" style="left:975.60px;top:226.00px;line-height:14.0px;font-size:10px;color:#6366f1;letter-spacing:0.221px;">pre-release test</div><div class="a" style="left:975.6px;top:238px;width:72.2px;height:1px;border-top:1px dotted #a5b4fc"></div><div class="t" style="left:975.60px;top:253.70px;line-height:14.0px;font-size:10px;color:#111827;letter-spacing:0.150px;">Jun 9, 2025 6:54 PM</div><div class="t" style="left:1085.80px;top:253.70px;line-height:14.0px;font-size:10px;color:#111827;letter-spacing:0.139px;">Jun 9, 2025 6:55 PM</div><svg class="a" style="left:1073px;top:256px;" width="10" height="9" viewBox="0 0 10 9"><path d="M0.8 4.5 H8.2 M5.6 2 L8.4 4.5 L5.6 7" fill="none" stroke="#111827" stroke-width="1.2"/></svg><svg class="a" style="left:0;top:0" width="1280" height="300"><rect x="975.6" y="286" width="5.9" height="6.5" fill="#6366f1" fill-opacity="0.10"/><rect x="981.5" y="286" width="5.9" height="6.5" fill="#6366f1" fill-opacity="0.14"/><rect x="987.4" y="286" width="5.9" height="6.5" fill="#6366f1" fill-opacity="0.07"/><rect x="993.3" y="286" width="5.9" height="6.5" fill="#6366f1" fill-opacity="0.32"/><rect x="999.2" y="286" width="5.9" height="6.5" fill="#6366f1" fill-opacity="0.21"/><rect x="1005.1" y="286" width="5.9" height="6.5" fill="#6366f1" fill-opacity="0.21"/><rect x="1011.0" y="286" width="5.9" height="6.5" fill="#6366f1" fill-opacity="0.24"/><rect x="1016.9" y="286" width="5.9" height="6.5" fill="#6366f1" fill-opacity="0.32"/><rect x="1022.8" y="286" width="5.9" height="6.5" fill="#6366f1" fill-opacity="0.35"/><rect x="1028.7" y="286" width="5.9" height="6.5" fill="#6366f1" fill-opacity="0.35"/><rect x="1034.6" y="286" width="5.9" height="6.5" fill="#6366f1" fill-opacity="0.07"/><rect x="1040.5" y="286" width="5.9" height="6.5" fill="#6366f1" fill-opacity="0.07"/><rect x="1046.4" y="286" width="5.9" height="6.5" fill="#6366f1" fill-opacity="0.24"/><rect x="1052.3" y="286" width="5.9" height="6.5" fill="#6366f1" fill-opacity="0.07"/><rect x="1058.2" y="286" width="5.9" height="6.5" fill="#6366f1" fill-opacity="0.10"/><rect x="1064.1" y="286" width="5.9" height="6.5" fill="#6366f1" fill-opacity="0.24"/><rect x="1070.0" y="286" width="5.9" height="6.5" fill="#6366f1" fill-opacity="0.24"/><rect x="1075.9" y="286" width="5.9" height="6.5" fill="#6366f1" fill-opacity="0.28"/><rect x="1081.8" y="286" width="5.9" height="6.5" fill="#6366f1" fill-opacity="0.24"/><rect x="1087.7" y="286" width="5.9" height="6.5" fill="#6366f1" fill-opacity="0.21"/><rect x="1093.6" y="286" width="5.9" height="6.5" fill="#6366f1" fill-opacity="0.32"/><rect x="1099.5" y="286" width="5.9" height="6.5" fill="#6366f1" fill-opacity="0.10"/><rect x="1105.4" y="286" width="5.9" height="6.5" fill="#6366f1" fill-opacity="0.07"/><rect x="1111.3" y="286" width="5.9" height="6.5" fill="#6366f1" fill-opacity="0.14"/><rect x="1117.2" y="286" width="5.9" height="6.5" fill="#6366f1" fill-opacity="0.35"/><rect x="1123.1" y="286" width="5.9" height="6.5" fill="#6366f1" fill-opacity="0.35"/><rect x="1129.0" y="286" width="5.9" height="6.5" fill="#6366f1" fill-opacity="0.49"/><rect x="1134.9" y="286" width="5.9" height="6.5" fill="#6366f1" fill-opacity="0.10"/><rect x="1140.8" y="286" width="5.9" height="6.5" fill="#6366f1" fill-opacity="0.14"/><rect x="1146.7" y="286" width="5.9" height="6.5" fill="#6366f1" fill-opacity="0.03"/><rect x="1152.6" y="286" width="5.9" height="6.5" fill="#6366f1" fill-opacity="0.24"/><rect x="1158.5" y="286" width="5.9" height="6.5" fill="#6366f1" fill-opacity="0.28"/><rect x="1164.4" y="286" width="5.9" height="6.5" fill="#6366f1" fill-opacity="0.14"/><rect x="1170.3" y="286" width="5.9" height="6.5" fill="#6366f1" fill-opacity="0.17"/><rect x="1176.2" y="286" width="5.9" height="6.5" fill="#6366f1" fill-opacity="0.32"/><rect x="1182.1" y="286" width="5.9" height="6.5" fill="#6366f1" fill-opacity="0.14"/><rect x="1188.0" y="286" width="5.9" height="6.5" fill="#6366f1" fill-opacity="0.32"/><rect x="1193.9" y="286" width="5.9" height="6.5" fill="#6366f1" fill-opacity="0.10"/><rect x="1199.8" y="286" width="5.9" height="6.5" fill="#6366f1" fill-opacity="0.07"/><rect x="1205.7" y="286" width="5.9" height="6.5" fill="#6366f1" fill-opacity="0.28"/><rect x="1211.6" y="286" width="5.9" height="6.5" fill="#6366f1" fill-opacity="0.39"/><rect x="1217.5" y="286" width="5.9" height="6.5" fill="#6366f1" fill-opacity="0.10"/><rect x="1223.4" y="286" width="5.9" height="6.5" fill="#6366f1" fill-opacity="0.14"/><rect x="1229.3" y="286" width="5.9" height="6.5" fill="#6366f1" fill-opacity="0.03"/><rect x="975.6" y="292" width="269" height="3" fill="#dde1fd"/></svg><div class="t" style="left:975.60px;top:308.70px;line-height:14.0px;font-size:10px;color:#111827;letter-spacing:0.172px;">Jun 9, 2025 6:53 PM</div><div class="t" style="left:385.25px;top:346.09px;line-height:15.82px;font-size:11.3px;color:#6366f1;font-weight:500;letter-spacing:0.531px;">Tests</div><div class="t" style="left:430.00px;top:346.09px;line-height:15.82px;font-size:11.3px;color:#6b7280;font-weight:500;letter-spacing:0.433px;">Statistics</div><div class="t" style="left:495.60px;top:346.09px;line-height:15.82px;font-size:11.3px;color:#6b7280;font-weight:500;letter-spacing:0.381px;">Defects</div><div class="a" style="left:385px;top:367.5px;width:873px;height:1px;background:#f1f2f4"></div><div class="a" style="left:385px;top:367.5px;width:28px;height:2px;background:#6366f1"></div><div class="a" style="left:385px;top:377.1px;width:74.10000000000002px;height:25.6px;background:#e5e7eb;border-radius:4px"></div><div class="a" style="left:465px;top:377.1px;width:61.60000000000002px;height:25.6px;background:#e5e7eb;border-radius:4px"></div><div class="a" style="left:532.4px;top:377.1px;width:73.60000000000002px;height:25.6px;background:#e5e7eb;border-radius:4px"></div><div class="a" style="left:612.4px;top:377.1px;width:73.5px;height:25.6px;background:#e5e7eb;border-radius:4px"></div><div class="a" style="left:692.3px;top:377.1px;width:45.10000000000002px;height:25.6px;background:#e5e7eb;border-radius:4px"></div><div class="t" style="left:396.60px;top:382.90px;line-height:15.4px;font-size:11px;color:#4b5563;letter-spacing:0.079px;">Passed</div><div class="t" style="left:436.50px;top:382.90px;line-height:15.4px;font-size:11px;color:#22c55e;">10</div><div class="t" style="left:476.50px;top:382.90px;line-height:15.4px;font-size:11px;color:#4b5563;letter-spacing:0.086px;">Failed</div><div class="t" style="left:509.40px;top:382.90px;line-height:15.4px;font-size:11px;color:#ef4444;">7</div><div class="t" style="left:543.60px;top:382.90px;line-height:15.4px;font-size:11px;color:#4b5563;letter-spacing:0.356px;">Skipped</div><div class="t" style="left:588.30px;top:382.90px;line-height:15.4px;font-size:11px;color:#f59e0b;">0</div><div class="t" style="left:623.50px;top:382.90px;line-height:15.4px;font-size:11px;color:#4b5563;letter-spacing:0.538px;">Pending</div><div class="t" style="left:669.50px;top:382.90px;line-height:15.4px;font-size:11px;color:#4b5563;">0</div><svg class="a" style="left:703px;top:383.5px;" width="14" height="13" viewBox="0 0 14 13"><path d="M1.6 1.6 H12.4 V9.4 H5 L2.2 11.9 V9.4 H1.6 Z" fill="none" stroke="#4b5563" stroke-width="1.6" stroke-linejoin="round"/><rect x="6.4" y="3.2" width="1.2" height="3.4" fill="#4b5563"/><rect x="6.4" y="7.4" width="1.2" height="1.1" fill="#4b5563"/></svg><div class="t" style="left:719.40px;top:383.40px;line-height:15.4px;font-size:11px;color:#6366f1;">3</div><div class="a" style="left:746px;top:377.1px;width:150.6px;height:26px;background:#fff;border:1px solid #e5e7eb;border-radius:4px;box-sizing:border-box"></div><svg class="a" style="left:755px;top:384px;" width="12" height="12" viewBox="0 0 12 12"><circle cx="4.8" cy="4.8" r="3.6" fill="none" stroke="#9ca3af" stroke-width="1.2"/><line x1="7.4" y1="7.4" x2="10.4" y2="10.4" stroke="#9ca3af" stroke-width="1.3" stroke-linecap="round"/></svg><div class="a" style="left:770px;top:380px;width:111px;height:20px;overflow:hidden"><div class="t" style="left:4.00px;top:2.94px;line-height:15.12px;font-size:10.8px;color:#6b7280;letter-spacing:-0.188px;">Search by title/message</div></div><div class="t" style="left:385.60px;top:409.95px;line-height:14.7px;font-size:10.5px;color:#111827;letter-spacing:0.523px;">sort by:</div><div class="t" style="left:426.90px;top:409.95px;line-height:14.7px;font-size:10.5px;color:#6366f1;letter-spacing:0.628px;">suite</div><div class="t" style="left:454.75px;top:409.95px;line-height:14.7px;font-size:10.5px;color:#111827;">/</div><div class="t" style="left:461.50px;top:409.95px;line-height:14.7px;font-size:10.5px;color:#6366f1;letter-spacing:0.627px;">testcase</div><div class="t" style="left:508.40px;top:409.95px;line-height:14.7px;font-size:10.5px;color:#111827;">/</div><div class="t" style="left:515.00px;top:409.95px;line-height:14.7px;font-size:10.5px;color:#6366f1;letter-spacing:0.532px;">failure</div><div class="a" style="left:427px;top:422.5px;width:25px;height:1px;border-top:1px dotted #a5b4fc"></div><div class="a" style="left:461.5px;top:422.5px;width:43.0px;height:1px;border-top:1px dotted #a5b4fc"></div><div class="a" style="left:515px;top:422.5px;width:31.5px;height:1px;border-top:1px dotted #a5b4fc"></div><svg class="a" style="left:385.9px;top:438.4px;" width="8.2" height="8.2" viewBox="0 0 8.2 8.2"><circle cx="4.1" cy="4.1" r="4.1" fill="#1fb06a"/><path d="M2.3 4.2 L3.6 5.5 L6.0 2.9" fill="none" stroke="#fff" stroke-width="1.3"/></svg><svg class="a" style="left:401px;top:436.5px;" width="12" height="12" viewBox="0 0 12 12"><g fill="none" stroke="#6b7280" stroke-width="1.15"><rect x="1.3" y="1.9" width="9.4" height="9.6" rx="1.2"/></g><rect x="3.8" y="0.6" width="4.4" height="2.4" rx="0.6" fill="#6b7280"/><g fill="#6b7280"><rect x="3.2" y="4.9" width="1.3" height="1.3"/><rect x="5.6" y="4.9" width="3.3" height="1.2"/><rect x="3.2" y="7.9" width="1.3" height="1.3"/><rect x="5.6" y="7.9" width="3.3" height="1.2"/></g></svg><div class="t" style="left:419.20px;top:436.10px;line-height:14.0px;font-size:10.0px;color:#5f6673;font-family:'Liberation Mono',monospace;letter-spacing:-0.151px;-webkit-text-stroke:0.3px #6b7280">@first Create Todos 99…</div><svg class="a" style="left:565.3px;top:435.6px;" width="13.8" height="13.8" viewBox="0 0 14 14"><rect width="14" height="14" rx="3" fill="#f6f1ff"/><g fill="none" stroke="#8b3fe6"><path d="M7.80,11.53 A4.6,4.6 0 1,1 11.53,7.80" stroke-width="1.35"/><path d="M7.47,9.66 A2.7,2.7 0 1,1 9.66,7.47" stroke-width="1.2"/></g><path d="M7.2,7.2 L8.8,12.3 L9.9,10.5 L11.8,12.4 L12.4,11.8 L10.5,9.9 L12.3,8.8 Z" fill="#6d28d9"/></svg><div class="t" style="left:582.00px;top:434.95px;line-height:16.1px;font-size:11.5px;color:#111827;letter-spacing:0.042px;">Create a new todo item 99</div><svg class="a" style="left:385.9px;top:460.37px;" width="8.2" height="8.2" viewBox="0 0 8.2 8.2"><circle cx="4.1" cy="4.1" r="4.1" fill="#1fb06a"/><path d="M2.3 4.2 L3.6 5.5 L6.0 2.9" fill="none" stroke="#fff" stroke-width="1.3"/></svg><svg class="a" style="left:401px;top:458.47px;" width="12" height="12" viewBox="0 0 12 12"><g fill="none" stroke="#6b7280" stroke-width="1.15"><rect x="1.3" y="1.9" width="9.4" height="9.6" rx="1.2"/></g><rect x="3.8" y="0.6" width="4.4" height="2.4" rx="0.6" fill="#6b7280"/><g fill="#6b7280"><rect x="3.2" y="4.9" width="1.3" height="1.3"/><rect x="5.6" y="4.9" width="3.3" height="1.2"/><rect x="3.2" y="7.9" width="1.3" height="1.3"/><rect x="5.6" y="7.9" width="3.3" height="1.2"/></g></svg><div class="t" style="left:419.20px;top:458.07px;line-height:14.0px;font-size:10.0px;color:#5f6673;font-family:'Liberation Mono',monospace;letter-spacing:-0.151px;-webkit-text-stroke:0.3px #6b7280">@first Create Todos 99…</div><svg class="a" style="left:565.3px;top:457.57000000000005px;" width="13.8" height="13.8" viewBox="0 0 14 14"><rect width="14" height="14" rx="3" fill="#f6f1ff"/><g fill="none" stroke="#8b3fe6"><path d="M7.80,11.53 A4.6,4.6 0 1,1 11.53,7.80" stroke-width="1.35"/><path d="M7.47,9.66 A2.7,2.7 0 1,1 9.66,7.47" stroke-width="1.2"/></g><path d="M7.2,7.2 L8.8,12.3 L9.9,10.5 L11.8,12.4 L12.4,11.8 L10.5,9.9 L12.3,8.8 Z" fill="#6d28d9"/></svg><div class="t" style="left:582.00px;top:456.92px;line-height:16.1px;font-size:11.5px;color:#111827;letter-spacing:0.079px;">Create multiple todo items 99</div><svg class="a" style="left:385.9px;top:482.34px;" width="8.2" height="8.2" viewBox="0 0 8.2 8.2"><circle cx="4.1" cy="4.1" r="4.1" fill="#1fb06a"/><path d="M2.3 4.2 L3.6 5.5 L6.0 2.9" fill="none" stroke="#fff" stroke-width="1.3"/></svg><svg class="a" style="left:401px;top:480.44px;" width="12" height="12" viewBox="0 0 12 12"><g fill="none" stroke="#6b7280" stroke-width="1.15"><rect x="1.3" y="1.9" width="9.4" height="9.6" rx="1.2"/></g><rect x="3.8" y="0.6" width="4.4" height="2.4" rx="0.6" fill="#6b7280"/><g fill="#6b7280"><rect x="3.2" y="4.9" width="1.3" height="1.3"/><rect x="5.6" y="4.9" width="3.3" height="1.2"/><rect x="3.2" y="7.9" width="1.3" height="1.3"/><rect x="5.6" y="7.9" width="3.3" height="1.2"/></g></svg><div class="t" style="left:419.20px;top:480.04px;line-height:14.0px;font-size:10.0px;color:#5f6673;font-family:'Liberation Mono',monospace;letter-spacing:-0.151px;-webkit-text-stroke:0.3px #6b7280">@first Create Todos 99…</div><svg class="a" style="left:565.3px;top:479.54px;" width="13.8" height="13.8" viewBox="0 0 14 14"><rect width="14" height="14" rx="3" fill="#f6f1ff"/><g fill="none" stroke="#8b3fe6"><path d="M7.80,11.53 A4.6,4.6 0 1,1 11.53,7.80" stroke-width="1.35"/><path d="M7.47,9.66 A2.7,2.7 0 1,1 9.66,7.47" stroke-width="1.2"/></g><path d="M7.2,7.2 L8.8,12.3 L9.9,10.5 L11.8,12.4 L12.4,11.8 L10.5,9.9 L12.3,8.8 Z" fill="#6d28d9"/></svg><div class="t" style="left:582.00px;top:478.89px;line-height:16.1px;font-size:11.5px;color:#111827;letter-spacing:0.115px;">Todos containing weird characters 99</div><svg class="a" style="left:385.9px;top:504.30999999999995px;" width="8.2" height="8.2" viewBox="0 0 8.2 8.2"><circle cx="4.1" cy="4.1" r="4.1" fill="#1fb06a"/><path d="M2.3 4.2 L3.6 5.5 L6.0 2.9" fill="none" stroke="#fff" stroke-width="1.3"/></svg><svg class="a" style="left:401px;top:502.40999999999997px;" width="12" height="12" viewBox="0 0 12 12"><g fill="none" stroke="#6b7280" stroke-width="1.15"><rect x="1.3" y="1.9" width="9.4" height="9.6" rx="1.2"/></g><rect x="3.8" y="0.6" width="4.4" height="2.4" rx="0.6" fill="#6b7280"/><g fill="#6b7280"><rect x="3.2" y="4.9" width="1.3" height="1.3"/><rect x="5.6" y="4.9" width="3.3" height="1.2"/><rect x="3.2" y="7.9" width="1.3" height="1.3"/><rect x="5.6" y="7.9" width="3.3" height="1.2"/></g></svg><div class="t" style="left:419.20px;top:502.01px;line-height:14.0px;font-size:10.0px;color:#5f6673;font-family:'Liberation Mono',monospace;letter-spacing:-0.151px;-webkit-text-stroke:0.3px #6b7280">@first Create Todos 99…</div><svg class="a" style="left:565.3px;top:501.51px;" width="13.8" height="13.8" viewBox="0 0 14 14"><rect width="14" height="14" rx="3" fill="#f6f1ff"/><g fill="none" stroke="#8b3fe6"><path d="M7.80,11.53 A4.6,4.6 0 1,1 11.53,7.80" stroke-width="1.35"/><path d="M7.47,9.66 A2.7,2.7 0 1,1 9.66,7.47" stroke-width="1.2"/></g><path d="M7.2,7.2 L8.8,12.3 L9.9,10.5 L11.8,12.4 L12.4,11.8 L10.5,9.9 L12.3,8.8 Z" fill="#6d28d9"/></svg><div class="t" style="left:582.00px;top:500.86px;line-height:16.1px;font-size:11.5px;color:#111827;letter-spacing:0.115px;">Todos containing weird characters 99</div><svg class="a" style="left:385.9px;top:526.28px;" width="8.2" height="8.2" viewBox="0 0 8.2 8.2"><circle cx="4.1" cy="4.1" r="4.1" fill="#1fb06a"/><path d="M2.3 4.2 L3.6 5.5 L6.0 2.9" fill="none" stroke="#fff" stroke-width="1.3"/></svg><svg class="a" style="left:401px;top:524.38px;" width="12" height="12" viewBox="0 0 12 12"><g fill="none" stroke="#6b7280" stroke-width="1.15"><rect x="1.3" y="1.9" width="9.4" height="9.6" rx="1.2"/></g><rect x="3.8" y="0.6" width="4.4" height="2.4" rx="0.6" fill="#6b7280"/><g fill="#6b7280"><rect x="3.2" y="4.9" width="1.3" height="1.3"/><rect x="5.6" y="4.9" width="3.3" height="1.2"/><rect x="3.2" y="7.9" width="1.3" height="1.3"/><rect x="5.6" y="7.9" width="3.3" height="1.2"/></g></svg><div class="t" style="left:419.20px;top:523.98px;line-height:14.0px;font-size:10.0px;color:#5f6673;font-family:'Liberation Mono',monospace;letter-spacing:-0.151px;-webkit-text-stroke:0.3px #6b7280">@first Create Todos 99…</div><svg class="a" style="left:565.3px;top:523.48px;" width="13.8" height="13.8" viewBox="0 0 14 14"><rect width="14" height="14" rx="3" fill="#f6f1ff"/><g fill="none" stroke="#8b3fe6"><path d="M7.80,11.53 A4.6,4.6 0 1,1 11.53,7.80" stroke-width="1.35"/><path d="M7.47,9.66 A2.7,2.7 0 1,1 9.66,7.47" stroke-width="1.2"/></g><path d="M7.2,7.2 L8.8,12.3 L9.9,10.5 L11.8,12.4 L12.4,11.8 L10.5,9.9 L12.3,8.8 Z" fill="#6d28d9"/></svg><div class="t" style="left:582.00px;top:522.83px;line-height:16.1px;font-size:11.5px;color:#111827;letter-spacing:0.115px;">Todos containing weird characters 99</div><svg class="a" style="left:385.9px;top:548.25px;" width="8.2" height="8.2" viewBox="0 0 8.2 8.2"><circle cx="4.1" cy="4.1" r="4.1" fill="#1fb06a"/><path d="M2.3 4.2 L3.6 5.5 L6.0 2.9" fill="none" stroke="#fff" stroke-width="1.3"/></svg><svg class="a" style="left:401px;top:546.35px;" width="12" height="12" viewBox="0 0 12 12"><g fill="none" stroke="#6b7280" stroke-width="1.15"><rect x="1.3" y="1.9" width="9.4" height="9.6" rx="1.2"/></g><rect x="3.8" y="0.6" width="4.4" height="2.4" rx="0.6" fill="#6b7280"/><g fill="#6b7280"><rect x="3.2" y="4.9" width="1.3" height="1.3"/><rect x="5.6" y="4.9" width="3.3" height="1.2"/><rect x="3.2" y="7.9" width="1.3" height="1.3"/><rect x="5.6" y="7.9" width="3.3" height="1.2"/></g></svg><div class="t" style="left:419.20px;top:545.95px;line-height:14.0px;font-size:10.0px;color:#5f6673;font-family:'Liberation Mono',monospace;letter-spacing:-0.151px;-webkit-text-stroke:0.3px #6b7280">@first Create Todos 99…</div><svg class="a" style="left:565.3px;top:545.45px;" width="13.8" height="13.8" viewBox="0 0 14 14"><rect width="14" height="14" rx="3" fill="#f6f1ff"/><g fill="none" stroke="#8b3fe6"><path d="M7.80,11.53 A4.6,4.6 0 1,1 11.53,7.80" stroke-width="1.35"/><path d="M7.47,9.66 A2.7,2.7 0 1,1 9.66,7.47" stroke-width="1.2"/></g><path d="M7.2,7.2 L8.8,12.3 L9.9,10.5 L11.8,12.4 L12.4,11.8 L10.5,9.9 L12.3,8.8 Z" fill="#6d28d9"/></svg><div class="t" style="left:582.00px;top:544.80px;line-height:16.1px;font-size:11.5px;color:#111827;letter-spacing:0.099px;">Text input field should be cleared after each item 99</div><svg class="a" style="left:385.9px;top:570.2199999999999px;" width="8.2" height="8.2" viewBox="0 0 8.2 8.2"><circle cx="4.1" cy="4.1" r="4.1" fill="#ef4444"/><rect x="2.1" y="3.4" width="4" height="1.4" rx="0.5" fill="#fff"/></svg><svg class="a" style="left:401px;top:568.3199999999999px;" width="12" height="12" viewBox="0 0 12 12"><g fill="none" stroke="#6b7280" stroke-width="1.15"><rect x="1.3" y="1.9" width="9.4" height="9.6" rx="1.2"/></g><rect x="3.8" y="0.6" width="4.4" height="2.4" rx="0.6" fill="#6b7280"/><g fill="#6b7280"><rect x="3.2" y="4.9" width="1.3" height="1.3"/><rect x="5.6" y="4.9" width="3.3" height="1.2"/><rect x="3.2" y="7.9" width="1.3" height="1.3"/><rect x="5.6" y="7.9" width="3.3" height="1.2"/></g></svg><div class="t" style="left:419.20px;top:567.92px;line-height:14.0px;font-size:10.0px;color:#5f6673;font-family:'Liberation Mono',monospace;letter-spacing:-0.151px;-webkit-text-stroke:0.3px #6b7280">@first Create Todos 99…</div><svg class="a" style="left:565.3px;top:567.42px;" width="13.8" height="13.8" viewBox="0 0 14 14"><rect width="14" height="14" rx="3" fill="#f6f1ff"/><g fill="none" stroke="#8b3fe6"><path d="M7.80,11.53 A4.6,4.6 0 1,1 11.53,7.80" stroke-width="1.35"/><path d="M7.47,9.66 A2.7,2.7 0 1,1 9.66,7.47" stroke-width="1.2"/></g><path d="M7.2,7.2 L8.8,12.3 L9.9,10.5 L11.8,12.4 L12.4,11.8 L10.5,9.9 L12.3,8.8 Z" fill="#6d28d9"/></svg><div class="t" style="left:582.00px;top:566.77px;line-height:16.1px;font-size:11.5px;color:#111827;letter-spacing:0.129px;">Text input should be trimmed 99</div><svg class="a" style="left:385.9px;top:592.1899999999999px;" width="8.2" height="8.2" viewBox="0 0 8.2 8.2"><circle cx="4.1" cy="4.1" r="4.1" fill="#ef4444"/><rect x="2.1" y="3.4" width="4" height="1.4" rx="0.5" fill="#fff"/></svg><svg class="a" style="left:401px;top:590.29px;" width="12" height="12" viewBox="0 0 12 12"><g fill="none" stroke="#6b7280" stroke-width="1.15"><rect x="1.3" y="1.9" width="9.4" height="9.6" rx="1.2"/></g><rect x="3.8" y="0.6" width="4.4" height="2.4" rx="0.6" fill="#6b7280"/><g fill="#6b7280"><rect x="3.2" y="4.9" width="1.3" height="1.3"/><rect x="5.6" y="4.9" width="3.3" height="1.2"/><rect x="3.2" y="7.9" width="1.3" height="1.3"/><rect x="5.6" y="7.9" width="3.3" height="1.2"/></g></svg><div class="t" style="left:419.20px;top:589.89px;line-height:14.0px;font-size:10.0px;color:#5f6673;font-family:'Liberation Mono',monospace;letter-spacing:-0.151px;-webkit-text-stroke:0.3px #6b7280">@first Create Todos 99…</div><svg class="a" style="left:565.3px;top:589.39px;" width="13.8" height="13.8" viewBox="0 0 14 14"><rect width="14" height="14" rx="3" fill="#f6f1ff"/><g fill="none" stroke="#8b3fe6"><path d="M7.80,11.53 A4.6,4.6 0 1,1 11.53,7.80" stroke-width="1.35"/><path d="M7.47,9.66 A2.7,2.7 0 1,1 9.66,7.47" stroke-width="1.2"/></g><path d="M7.2,7.2 L8.8,12.3 L9.9,10.5 L11.8,12.4 L12.4,11.8 L10.5,9.9 L12.3,8.8 Z" fill="#6d28d9"/></svg><div class="t" style="left:582.00px;top:588.74px;line-height:16.1px;font-size:11.5px;color:#111827;letter-spacing:0.105px;">New todos should be added to the bottom of the list 99</div><svg class="a" style="left:385.9px;top:614.16px;" width="8.2" height="8.2" viewBox="0 0 8.2 8.2"><circle cx="4.1" cy="4.1" r="4.1" fill="#1fb06a"/><path d="M2.3 4.2 L3.6 5.5 L6.0 2.9" fill="none" stroke="#fff" stroke-width="1.3"/></svg><svg class="a" style="left:401px;top:612.26px;" width="12" height="12" viewBox="0 0 12 12"><g fill="none" stroke="#6b7280" stroke-width="1.15"><rect x="1.3" y="1.9" width="9.4" height="9.6" rx="1.2"/></g><rect x="3.8" y="0.6" width="4.4" height="2.4" rx="0.6" fill="#6b7280"/><g fill="#6b7280"><rect x="3.2" y="4.9" width="1.3" height="1.3"/><rect x="5.6" y="4.9" width="3.3" height="1.2"/><rect x="3.2" y="7.9" width="1.3" height="1.3"/><rect x="5.6" y="7.9" width="3.3" height="1.2"/></g></svg><div class="t" style="left:419.20px;top:611.86px;line-height:14.0px;font-size:10.0px;color:#5f6673;font-family:'Liberation Mono',monospace;letter-spacing:-0.151px;-webkit-text-stroke:0.3px #6b7280">@first Create Todos 99…</div><svg class="a" style="left:565.3px;top:611.36px;" width="13.8" height="13.8" viewBox="0 0 14 14"><rect width="14" height="14" rx="3" fill="#f6f1ff"/><g fill="none" stroke="#8b3fe6"><path d="M7.80,11.53 A4.6,4.6 0 1,1 11.53,7.80" stroke-width="1.35"/><path d="M7.47,9.66 A2.7,2.7 0 1,1 9.66,7.47" stroke-width="1.2"/></g><path d="M7.2,7.2 L8.8,12.3 L9.9,10.5 L11.8,12.4 L12.4,11.8 L10.5,9.9 L12.3,8.8 Z" fill="#6d28d9"/></svg><div class="t" style="left:582.00px;top:610.71px;line-height:16.1px;font-size:11.5px;color:#111827;letter-spacing:0.020px;">Footer should be visible when adding TODOs 99</div><svg class="a" style="left:385.9px;top:636.13px;" width="8.2" height="8.2" viewBox="0 0 8.2 8.2"><circle cx="4.1" cy="4.1" r="4.1" fill="#1fb06a"/><path d="M2.3 4.2 L3.6 5.5 L6.0 2.9" fill="none" stroke="#fff" stroke-width="1.3"/></svg><svg class="a" style="left:401px;top:634.23px;" width="12" height="12" viewBox="0 0 12 12"><g fill="none" stroke="#6b7280" stroke-width="1.15"><rect x="1.3" y="1.9" width="9.4" height="9.6" rx="1.2"/></g><rect x="3.8" y="0.6" width="4.4" height="2.4" rx="0.6" fill="#6b7280"/><g fill="#6b7280"><rect x="3.2" y="4.9" width="1.3" height="1.3"/><rect x="5.6" y="4.9" width="3.3" height="1.2"/><rect x="3.2" y="7.9" width="1.3" height="1.3"/><rect x="5.6" y="7.9" width="3.3" height="1.2"/></g></svg><div class="t" style="left:419.20px;top:633.83px;line-height:14.0px;font-size:10.0px;color:#5f6673;font-family:'Liberation Mono',monospace;letter-spacing:-0.151px;-webkit-text-stroke:0.3px #6b7280">Edit/Delete Todos 99 @…</div><svg class="a" style="left:565.3px;top:633.33px;" width="13.8" height="13.8" viewBox="0 0 14 14"><rect width="14" height="14" rx="3" fill="#f6f1ff"/><g fill="none" stroke="#8b3fe6"><path d="M7.80,11.53 A4.6,4.6 0 1,1 11.53,7.80" stroke-width="1.35"/><path d="M7.47,9.66 A2.7,2.7 0 1,1 9.66,7.47" stroke-width="1.2"/></g><path d="M7.2,7.2 L8.8,12.3 L9.9,10.5 L11.8,12.4 L12.4,11.8 L10.5,9.9 L12.3,8.8 Z" fill="#6d28d9"/></svg><div class="t" style="left:582.00px;top:632.68px;line-height:16.1px;font-size:11.5px;color:#111827;letter-spacing:0.039px;">Edited todo is saved on blur 99</div><svg class="a" style="left:385.9px;top:658.1px;" width="8.2" height="8.2" viewBox="0 0 8.2 8.2"><circle cx="4.1" cy="4.1" r="4.1" fill="#ef4444"/><rect x="2.1" y="3.4" width="4" height="1.4" rx="0.5" fill="#fff"/></svg><svg class="a" style="left:401px;top:656.2px;" width="12" height="12" viewBox="0 0 12 12"><g fill="none" stroke="#6b7280" stroke-width="1.15"><rect x="1.3" y="1.9" width="9.4" height="9.6" rx="1.2"/></g><rect x="3.8" y="0.6" width="4.4" height="2.4" rx="0.6" fill="#6b7280"/><g fill="#6b7280"><rect x="3.2" y="4.9" width="1.3" height="1.3"/><rect x="5.6" y="4.9" width="3.3" height="1.2"/><rect x="3.2" y="7.9" width="1.3" height="1.3"/><rect x="5.6" y="7.9" width="3.3" height="1.2"/></g></svg><div class="t" style="left:419.20px;top:655.80px;line-height:14.0px;font-size:10.0px;color:#5f6673;font-family:'Liberation Mono',monospace;letter-spacing:-0.151px;-webkit-text-stroke:0.3px #6b7280">Edit/Delete Todos 99 @…</div><svg class="a" style="left:565.3px;top:655.3000000000001px;" width="13.8" height="13.8" viewBox="0 0 14 14"><rect width="14" height="14" rx="3" fill="#f6f1ff"/><g fill="none" stroke="#8b3fe6"><path d="M7.80,11.53 A4.6,4.6 0 1,1 11.53,7.80" stroke-width="1.35"/><path d="M7.47,9.66 A2.7,2.7 0 1,1 9.66,7.47" stroke-width="1.2"/></g><path d="M7.2,7.2 L8.8,12.3 L9.9,10.5 L11.8,12.4 L12.4,11.8 L10.5,9.9 L12.3,8.8 Z" fill="#6d28d9"/></svg><div class="t" style="left:582.00px;top:654.65px;line-height:16.1px;font-size:11.5px;color:#111827;letter-spacing:0.117px;">Delete todos 99</div><svg class="a" style="left:385.9px;top:680.0699999999999px;" width="8.2" height="8.2" viewBox="0 0 8.2 8.2"><circle cx="4.1" cy="4.1" r="4.1" fill="#ef4444"/><rect x="2.1" y="3.4" width="4" height="1.4" rx="0.5" fill="#fff"/></svg><svg class="a" style="left:401px;top:678.17px;" width="12" height="12" viewBox="0 0 12 12"><g fill="none" stroke="#6b7280" stroke-width="1.15"><rect x="1.3" y="1.9" width="9.4" height="9.6" rx="1.2"/></g><rect x="3.8" y="0.6" width="4.4" height="2.4" rx="0.6" fill="#6b7280"/><g fill="#6b7280"><rect x="3.2" y="4.9" width="1.3" height="1.3"/><rect x="5.6" y="4.9" width="3.3" height="1.2"/><rect x="3.2" y="7.9" width="1.3" height="1.3"/><rect x="5.6" y="7.9" width="3.3" height="1.2"/></g></svg><div class="t" style="left:419.20px;top:677.77px;line-height:14.0px;font-size:10.0px;color:#5f6673;font-family:'Liberation Mono',monospace;letter-spacing:-0.167px;-webkit-text-stroke:0.3px #6b7280">Login Page 99</div><svg class="a" style="left:565.3px;top:677.27px;" width="13.8" height="13.8" viewBox="0 0 14 14"><rect width="14" height="14" rx="3" fill="#f6f1ff"/><g fill="none" stroke="#8b3fe6"><path d="M7.80,11.53 A4.6,4.6 0 1,1 11.53,7.80" stroke-width="1.35"/><path d="M7.47,9.66 A2.7,2.7 0 1,1 9.66,7.47" stroke-width="1.2"/></g><path d="M7.2,7.2 L8.8,12.3 L9.9,10.5 L11.8,12.4 L12.4,11.8 L10.5,9.9 L12.3,8.8 Z" fill="#6d28d9"/></svg><div class="t" style="left:582.00px;top:676.62px;line-height:16.1px;font-size:11.5px;color:#111827;letter-spacing:0.133px;">Login page 99</div><svg class="a" style="left:385.9px;top:702.04px;" width="8.2" height="8.2" viewBox="0 0 8.2 8.2"><circle cx="4.1" cy="4.1" r="4.1" fill="#1fb06a"/><path d="M2.3 4.2 L3.6 5.5 L6.0 2.9" fill="none" stroke="#fff" stroke-width="1.3"/></svg><svg class="a" style="left:401px;top:700.14px;" width="12" height="12" viewBox="0 0 12 12"><g fill="none" stroke="#6b7280" stroke-width="1.15"><rect x="1.3" y="1.9" width="9.4" height="9.6" rx="1.2"/></g><rect x="3.8" y="0.6" width="4.4" height="2.4" rx="0.6" fill="#6b7280"/><g fill="#6b7280"><rect x="3.2" y="4.9" width="1.3" height="1.3"/><rect x="5.6" y="4.9" width="3.3" height="1.2"/><rect x="3.2" y="7.9" width="1.3" height="1.3"/><rect x="5.6" y="7.9" width="3.3" height="1.2"/></g></svg><div class="t" style="left:419.20px;top:699.74px;line-height:14.0px;font-size:10.0px;color:#5f6673;font-family:'Liberation Mono',monospace;letter-spacing:-0.151px;-webkit-text-stroke:0.3px #6b7280">Mark as completed/not …</div><svg class="a" style="left:565.3px;top:699.24px;" width="13.8" height="13.8" viewBox="0 0 14 14"><rect width="14" height="14" rx="3" fill="#f6f1ff"/><g fill="none" stroke="#8b3fe6"><path d="M7.80,11.53 A4.6,4.6 0 1,1 11.53,7.80" stroke-width="1.35"/><path d="M7.47,9.66 A2.7,2.7 0 1,1 9.66,7.47" stroke-width="1.2"/></g><path d="M7.2,7.2 L8.8,12.3 L9.9,10.5 L11.8,12.4 L12.4,11.8 L10.5,9.9 L12.3,8.8 Z" fill="#6d28d9"/></svg><div class="t" style="left:582.00px;top:698.59px;line-height:16.1px;font-size:11.5px;color:#111827;letter-spacing:0.121px;">Mark todos as completed 99</div><div class="a" style="left:1251px;top:430px;width:3.5px;height:213.3px;background:#c7d2fe;border-radius:2px"></div>
</body></html>
